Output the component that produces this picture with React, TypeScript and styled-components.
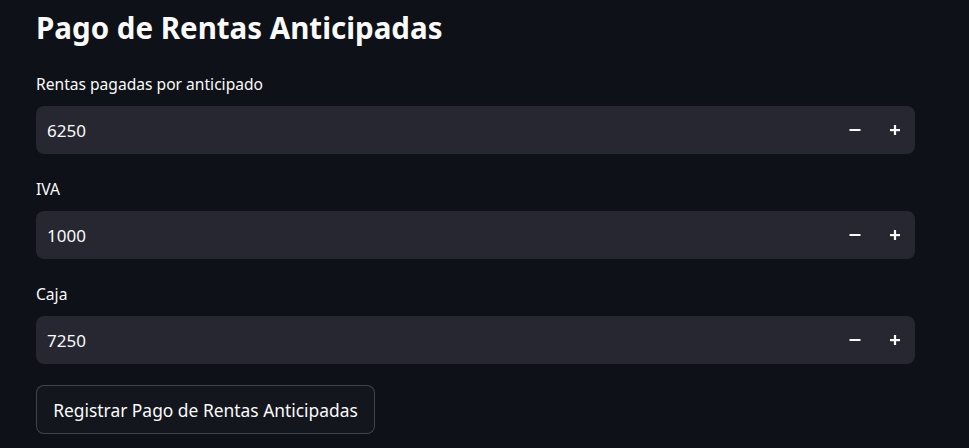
import React from "react";
import styled, { createGlobalStyle } from "styled-components";

const Global = createGlobalStyle`
  html, body { margin: 0; padding: 0; background: #0e1117; }
  body { font-family: "Noto Sans", "Open Sans", sans-serif; color: #fafafa; }
  * { box-sizing: border-box; }
`;

const Page = styled.main`
  width: 969px;
  height: 448px;
  overflow: hidden;
  padding: 10px 54px 0 36px;
  display: flex;
  flex-direction: column;
`;

const Title = styled.h1`
  margin: 0 0 28px;
  font-size: 29.5px;
  line-height: 36px;
  font-weight: 700;
  color: #fafafa;
`;

const Fields = styled.div`
  display: flex;
  flex-direction: column;
  gap: 25px;
`;

const Field = styled.div`
  display: flex;
  flex-direction: column;
  gap: 12px;
`;

const Label = styled.label`
  font-size: 15.6px;
  line-height: 20px;
  color: #fafafa;
`;

const InputBox = styled.div`
  height: 48px;
  border-radius: 8px;
  background: #262730;
  display: flex;
  align-items: center;
  padding-left: 11px;
`;

const Value = styled.span`
  flex: 1;
  font-size: 17px;
  color: #fafafa;
`;

const Step = styled.button`
  width: 40px;
  height: 48px;
  border: none;
  background: transparent;
  padding: 0;
  display: flex;
  align-items: center;
  justify-content: center;
  color: #fafafa;
  cursor: pointer;
`;

const Button = styled.button`
  margin-top: 21px;
  align-self: flex-start;
  width: 339px;
  height: 49px;
  border: 1px solid rgba(250, 250, 250, 0.2);
  border-radius: 8px;
  background: #13161d;
  color: #fafafa;
  font-family: inherit;
  font-size: 17.4px;
  padding: 0;
`;

const Minus = () => (
  <svg width="12" height="12" viewBox="0 0 12 12">
    <rect x="0.5" y="5" width="11" height="2" fill="currentColor" />
  </svg>
);

const Plus = () => (
  <svg width="12" height="12" viewBox="0 0 12 12">
    <rect x="1" y="5" width="10" height="2.2" fill="currentColor" />
    <rect x="4.9" y="1" width="2.2" height="10" fill="currentColor" />
  </svg>
);

const fields = [
  { label: "Rentas pagadas por anticipado", value: "6250" },
  { label: "IVA", value: "1000" },
  { label: "Caja", value: "7250" },
];

export default function App() {
  return (
    <>
      <Global />
      <Page>
        <Title>Pago de Rentas Anticipadas</Title>
        <Fields>
          {fields.map((f) => (
            <Field key={f.label}>
              <Label>{f.label}</Label>
              <InputBox>
                <Value>{f.value}</Value>
                <Step aria-label="minus">
                  <Minus />
                </Step>
                <Step aria-label="plus">
                  <Plus />
                </Step>
              </InputBox>
            </Field>
          ))}
        </Fields>
        <Button>Registrar Pago de Rentas Anticipadas</Button>
      </Page>
    </>
  );
}
